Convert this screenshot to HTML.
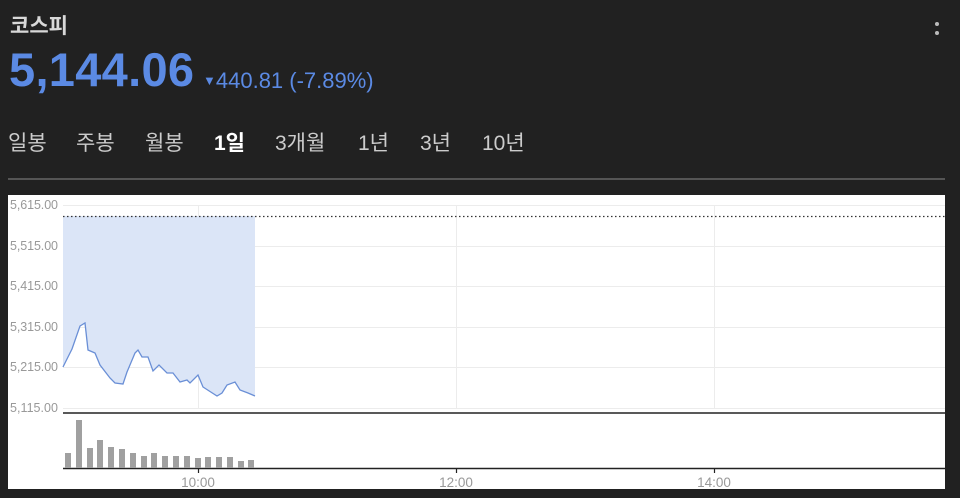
<!DOCTYPE html>
<html><head><meta charset="utf-8"><style>
body{margin:0;width:960px;height:498px;background:#212121;overflow:hidden;font-family:"Liberation Sans","Noto Sans CJK KR",sans-serif;position:relative}
.t{position:absolute;color:#ddd;white-space:nowrap}
.tabs span{position:absolute;white-space:nowrap}
</style></head><body>
<div class="t" style="left:10px;top:10px;font-size:21px;font-weight:bold;color:#d8d8d8">코스피</div>
<div class="t" style="left:9px;top:42px;font-size:47px;font-weight:bold;color:#5b8ae4;letter-spacing:0.3px">5,144.06</div>
<div class="t" style="left:203px;top:68px;font-size:22px;color:#5b8ae4"><span style="font-size:13px;vertical-align:3px">▼</span>440.81 (-7.89%)</div>
<div style="position:absolute;left:935px;top:22px;width:4px;height:4px;border-radius:50%;background:#bbb"></div>
<div style="position:absolute;left:935px;top:31px;width:4px;height:4px;border-radius:50%;background:#bbb"></div>
<div class="t tabs" style="left:8px;top:127px;font-size:21px;color:#ccc;width:600px;height:30px">
<span style="left:0">일봉</span><span style="left:68px">주봉</span><span style="left:137px">월봉</span><span style="left:206px;font-weight:bold;color:#fff">1일</span><span style="left:267px">3개월</span><span style="left:350px">1년</span><span style="left:412px">3년</span><span style="left:474px">10년</span></div>
<div style="position:absolute;left:8px;top:178px;width:937px;height:2px;background:#555"></div>
<svg style="position:absolute;left:0;top:0" width="960" height="498">
<rect x="8" y="195" width="937" height="294" fill="#fff"/>
<g stroke="#ececec" stroke-width="1">
<line x1="63" y1="205.5" x2="945" y2="205.5"/><line x1="63" y1="246.5" x2="945" y2="246.5"/><line x1="63" y1="286.5" x2="945" y2="286.5"/><line x1="63" y1="327.5" x2="945" y2="327.5"/><line x1="63" y1="367.5" x2="945" y2="367.5"/><line x1="63" y1="408.5" x2="945" y2="408.5"/>
<line x1="198.5" y1="205" x2="198.5" y2="408"/><line x1="456.5" y1="205" x2="456.5" y2="408"/><line x1="714.5" y1="205" x2="714.5" y2="408"/>
</g>
<polygon fill="#dbe5f7" points="63,216 255,216 255,396 248,393 240,390 235,382 227,385 222,393 217,396 203,387 198,375 190,383 187,380 180,382 173,373 167,373 159,365 153,371 148,357 142,357 138,350 135,353 127,372 123,384 115,383 110,378 100,365 95,353 88,350 85,323 80,326 72,349 68,357 63,367"/>
<polyline fill="none" stroke="#6a8fd6" stroke-width="1.3" points="63,367 68,357 72,349 80,326 85,323 88,350 95,353 100,365 110,378 115,383 123,384 127,372 135,353 138,350 142,357 148,357 153,371 159,365 167,373 173,373 180,382 187,380 190,383 198,375 203,387 217,396 222,393 227,385 235,382 240,390 248,393 255,396"/>
<line x1="63" y1="216.5" x2="945" y2="216.5" stroke="#333" stroke-width="1.2" stroke-dasharray="1.5,2.5"/>
<line x1="63" y1="413" x2="945" y2="413" stroke="#222" stroke-width="1.5"/>
<line x1="63" y1="468.5" x2="945" y2="468.5" stroke="#222" stroke-width="1.5"/>
<g stroke="#222" stroke-width="1.2"><line x1="198.5" y1="468" x2="198.5" y2="473"/><line x1="456.5" y1="468" x2="456.5" y2="473"/><line x1="714.5" y1="468" x2="714.5" y2="473"/></g>
<g fill="#a0a0a0">
<rect x="65" y="453" width="6" height="15"/><rect x="76" y="420" width="6" height="48"/><rect x="87" y="448" width="6" height="20"/><rect x="97" y="440" width="6" height="28"/><rect x="108" y="447" width="6" height="21"/><rect x="119" y="449" width="6" height="19"/><rect x="130" y="453" width="6" height="15"/><rect x="141" y="456" width="6" height="12"/><rect x="151" y="453" width="6" height="15"/><rect x="162" y="456" width="6" height="12"/><rect x="173" y="456" width="6" height="12"/><rect x="184" y="456" width="6" height="12"/><rect x="195" y="458" width="6" height="10"/><rect x="205" y="457" width="6" height="11"/><rect x="216" y="457" width="6" height="11"/><rect x="227" y="457" width="6" height="11"/><rect x="238" y="461" width="6" height="7"/><rect x="248" y="460" width="6" height="8"/>
</g>
<g font-family="Liberation Sans,sans-serif" font-size="12.5" fill="#999">
<text x="10" y="209" textLength="48">5,615.00</text><text x="10" y="250" textLength="48">5,515.00</text><text x="10" y="290" textLength="48">5,415.00</text><text x="10" y="331" textLength="48">5,315.00</text><text x="10" y="371" textLength="48">5,215.00</text><text x="10" y="412" textLength="48">5,115.00</text>
</g>
<g font-family="Liberation Sans,sans-serif" font-size="13.5" fill="#999">
<text x="198" y="487" text-anchor="middle">10:00</text><text x="456" y="487" text-anchor="middle">12:00</text><text x="714" y="487" text-anchor="middle">14:00</text>
</g>
</svg>
</body></html>
